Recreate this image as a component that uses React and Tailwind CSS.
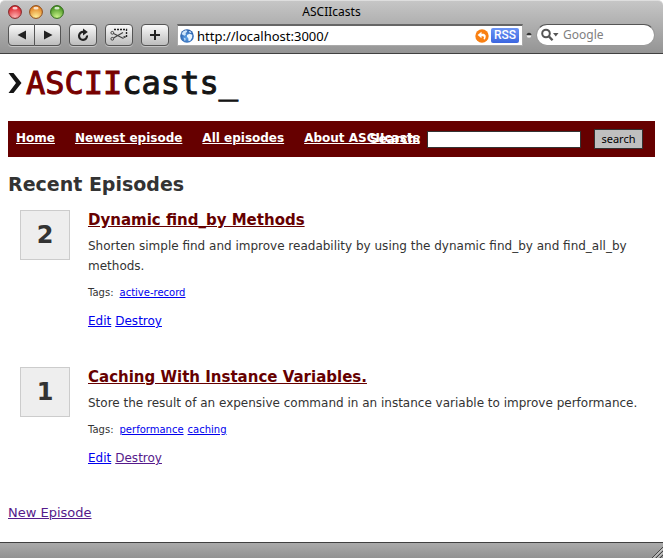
const episodes = [
  {
    number: 2,
    title: 'Dynamic find_by Methods',
    summary:
      'Shorten simple find and improve readability by using the dynamic find_by and find_all_by methods.',
    tags: ['active-record'],
    destroyVisited: false,
  },
  {
    number: 1,
    title: 'Caching With Instance Variables.',
    summary:
      'Store the result of an expensive command in an instance variable to improve performance.',
    tags: ['performance', 'caching'],
    destroyVisited: true,
  },
];

const toolButton =
  'flex h-[22px] items-center justify-center border border-[#555] bg-linear-to-b from-[#fafafa] to-[#bdbdbd] text-[#222] shadow-[0_1px_0_#c4c4c4]';

function Light({ label, rim, dark, bright }) {
  return (
    <button type="button" aria-label={label} className="size-[14px]">
      <svg viewBox="0 0 14 14" className="size-[14px]">
        <defs>
          <radialGradient id={label} cx="50%" cy="90%" r="85%">
            <stop offset="0" stopColor={bright} />
            <stop offset="1" stopColor={dark} />
          </radialGradient>
        </defs>
        <circle cx="7" cy="7" r="6.4" fill={`url(#${label})`} stroke={rim} />
        <ellipse cx="7" cy="3.2" rx="2.6" ry="1.4" fill="#fff" opacity=".75" />
      </svg>
    </button>
  );
}

function Globe() {
  return (
    <svg viewBox="0 0 14 14" className="size-[14px] shrink-0" aria-hidden="true">
      <defs>
        <radialGradient id="globe" cx="50%" cy="60%" r="60%">
          <stop offset="0" stopColor="#5fa4ea" />
          <stop offset="1" stopColor="#2458a4" />
        </radialGradient>
      </defs>
      <circle cx="7" cy="7" r="6.8" fill="url(#globe)" />
      <path d="M1.500 5 3 2.500 5.500 1.200l2 .5-.8 1.500-1.200.8.500 1.200L4.800 6.800 3 6z" fill="#cfe6fb" />
      <path d="m7 6 2.500-1.300 2.800 1-.2 3-1.900 3-1.700.3-.2-2.700L7 7.800z" fill="#eaf5ff" />
      <path d="M8.500 2.500 10 2l1.500 1.500-1.300.4z" fill="#cfe6fb" />
      <path d="m3.500 8.500 2 .8.2 1.500-1 1.400z" fill="#b5d8fa" />
    </svg>
  );
}

function BrowserBar() {
  return (
    <header className="h-[54px] rounded-t-[5px] border-t border-b border-t-[#dedede] border-b-[#404040] bg-linear-to-b from-[#c6c6c6] to-[#949494] font-['Noto_Sans',sans-serif]">
      <div className="grid h-[22px] grid-cols-[1fr_auto_1fr] items-center px-2">
        <div className="flex gap-[7px]">
          <Light label="Close" rim="#7e2626" dark="#dc1a22" bright="#ffb5b5" />
          <Light label="Minimize" rim="#8b4d1c" dark="#e07a1a" bright="#fff09a" />
          <Light label="Zoom" rim="#336c1c" dark="#3d8c18" bright="#ccf58c" />
        </div>
        <div className="text-[12px] leading-5 text-black">ASCIIcasts</div>
      </div>
      <div className="flex h-[24px] items-center px-2">
        <button type="button" aria-label="Back" className={`${toolButton} w-[27px] rounded-l-[4px]`}>
          <svg viewBox="0 0 10 10" className="size-[10px]"><path d="M9 .5v9L.5 5z" fill="currentColor" /></svg>
        </button>
        <button type="button" aria-label="Forward" className={`${toolButton} w-[26px] rounded-r-[4px] border-l-0`}>
          <svg viewBox="0 0 10 10" className="size-[10px]"><path d="M1 .5v9L9.500 5z" fill="currentColor" /></svg>
        </button>
        <button type="button" aria-label="Reload" className={`${toolButton} ml-2 w-[28px] rounded-[4px]`}>
          <svg viewBox="0 0 12 14" className="h-[14px] w-[12px]">
            <path d="M6.500 4A4 4 0 1 0 10 7.500" fill="none" stroke="currentColor" strokeWidth="2.200" />
            <path d="M6 .5 10.800 4 6 7.500z" fill="currentColor" />
          </svg>
        </button>
        <button type="button" aria-label="Web clip" className={`${toolButton} ml-2 w-[28px] rounded-[4px]`}>
          <svg viewBox="0 0 18 14" className="h-[14px] w-[18px]" fill="none" stroke="currentColor">
            <path d="M4 1.500h12.500v7.500H13" strokeWidth="1.400" strokeDasharray="2 1" />
            <path d="m3.500 5.500 10 5M3.500 10l9.500-5.500" stroke="#444" strokeWidth="1.200" />
            <circle cx="2.300" cy="4.800" r="1.400" stroke="#444" />
            <circle cx="2.300" cy="10.800" r="1.400" stroke="#444" />
          </svg>
        </button>
        <button type="button" aria-label="Add bookmark" className={`${toolButton} ml-2 w-[28px] rounded-[4px]`}>
          <svg viewBox="0 0 10 10" className="size-[10px]"><path d="M5 0v10M0 5h10" stroke="currentColor" strokeWidth="2" /></svg>
        </button>
        <div className="ml-2 flex h-[22px] min-w-0 flex-1 items-center border border-t-2 border-[#aaa] border-t-[#666] bg-white pr-[3px] pl-[2px]">
          <Globe />
          <input
            aria-label="Address"
            defaultValue="http://localhost:3000/"
            className="ml-[3px] min-w-0 flex-1 text-[13px] leading-4 text-black outline-none"
          />
          <svg viewBox="0 0 14 14" className="size-[14px] shrink-0" aria-hidden="true">
            <circle cx="7" cy="7" r="6.700" fill="#f98012" />
            <path d="M6.500 2.800 2.600 6l3.900 3.200V7.200h1.300c1.200 0 1.500.8.700 2.700l1.300.5C11.800 7 10.500 4.800 7.800 4.800H6.500z" fill="#fff" />
          </svg>
          <span className="ml-[2px] rounded-[2px] bg-linear-to-b from-[#6c94f5] to-[#3c66e0] px-[3px] font-['Roboto',sans-serif] text-[12px] leading-[15px] font-medium text-white">
            RSS
          </span>
        </div>
        <svg viewBox="0 0 6 6" className="mx-[3px] size-[6px]" aria-hidden="true">
          <circle cx="3" cy="3.500" r="2.300" fill="#eee" />
          <path d="M.5 3.200a2.500 2.500 0 0 1 5 0z" fill="#333" />
        </svg>
        <label className="ml-[1px] flex h-[22px] w-[119px] items-center rounded-full border border-[#999] border-t-[#555] bg-white px-1">
          <svg viewBox="0 0 18 14" className="h-[14px] w-[18px] shrink-0" aria-hidden="true">
            <circle cx="5" cy="5.500" r="3.800" fill="none" stroke="#555" strokeWidth="2" />
            <path d="m8 8.500 3.500 3.800" stroke="#555" strokeWidth="2.400" />
            <path d="M12 5h5.500l-2.700 3.500z" fill="#555" />
          </svg>
          <input
            aria-label="Google search"
            placeholder="Google"
            className="ml-[4px] w-full min-w-0 text-[12px] leading-4 outline-none placeholder:text-[#808080]"
          />
        </label>
      </div>
    </header>
  );
}

function Logo() {
  return (
    <div className="flex h-[67px] items-start pt-[8px] font-['DejaVu_Sans_Mono',monospace] text-[32px] leading-[42px] text-[#151515]">
      <svg viewBox="0 0 18 42" className="h-[42px] w-[18px]" fill="#151515" aria-hidden="true">
        <path d="M.5 11h5l8 10-8 10h-5l7.500-10z" />
      </svg>
      <span className="[-webkit-text-stroke:1px]">
        <span className="text-[#700]">ASCII</span>casts_
      </span>
    </div>
  );
}

function SiteNav() {
  return (
    <nav className="relative h-[36px] bg-[#600] px-2 text-[12px] leading-[34px] font-bold text-white">
      <div className="flex gap-5 whitespace-nowrap">
        <a href="#home" className="underline">Home</a>
        <a href="#newest" className="underline">Newest episode</a>
        <a href="#all" className="underline">All episodes</a>
        <a href="#about" className="underline">About ASCIIcasts</a>
      </div>
      <form className="absolute inset-y-0 right-3 flex items-center" onSubmit={(e) => e.preventDefault()}>
        <label htmlFor="q">Search:</label>
        <input id="q" className="ml-[6px] h-[17px] w-[154px] border border-[#333] bg-white px-1 font-normal text-black" />
        <button type="submit" className="ml-[13px] h-[20px] w-[49px] border border-[#333] bg-[#bfbfbf] font-['Noto_Sans',sans-serif] text-[11px] leading-4 font-normal text-black">
          search
        </button>
      </form>
    </nav>
  );
}

function Episode({ number, title, summary, tags, destroyVisited }) {
  return (
    <article className="flex gap-[18px] pl-3">
      <div className="flex size-[50px] shrink-0 items-center justify-center border border-[#ccc] bg-[#eee] text-[24px] leading-none font-bold">
        {number}
      </div>
      <div className="min-w-0 flex-1">
        <h2 className="text-[15px] leading-5 font-bold">
          <a href="#episode" className="text-[#600] underline">{title}</a>
        </h2>
        <p className="mt-[6px] text-[12px] leading-5">{summary}</p>
        <p className="mt-[9px] flex gap-1 text-[10px] leading-4">
          <span className="pr-[2px]">Tags:</span>
          {tags.map((tag) => (
            <a key={tag} href="#tag" className="text-[#00e] underline">{tag}</a>
          ))}
        </p>
        <p className="mt-[10px] flex gap-1 text-[12px] leading-5">
          <a href="#edit" className="text-[#00e] underline">Edit</a>
          <a href="#destroy" className={destroyVisited ? 'text-[#551a8b] underline' : 'text-[#00e] underline'}>
            Destroy
          </a>
        </p>
      </div>
    </article>
  );
}

export default function App() {
  return (
    <div className="flex min-h-screen flex-col bg-white font-['DejaVu_Sans',sans-serif] text-[#333]">
      <BrowserBar />
      <main className="flex-1 px-2 pb-4">
        <Logo />
        <SiteNav />
        <h1 className="mt-[15px] text-[19px] leading-6 font-bold">Recent Episodes</h1>
        <div className="mt-[14px] flex flex-col gap-9">
          {episodes.map((episode) => (
            <Episode key={episode.number} {...episode} />
          ))}
        </div>
        <p className="mt-[35px] text-[13px] leading-5">
          <a href="#new" className="text-[#551a8b] underline">New Episode</a>
        </p>
      </main>
      <footer className="flex h-4 items-end justify-end border-t border-[#404040] bg-linear-to-b from-[#aaa] to-[#929292]">
        <svg viewBox="0 0 12 12" className="size-[12px]" aria-hidden="true">
          <path d="M1 12 12 1M5 12l7-7M9 12l3-3" stroke="#444" />
          <path d="M2.500 12 12 2.500M6.500 12 12 6.500" stroke="#ddd" />
        </svg>
      </footer>
    </div>
  );
}
